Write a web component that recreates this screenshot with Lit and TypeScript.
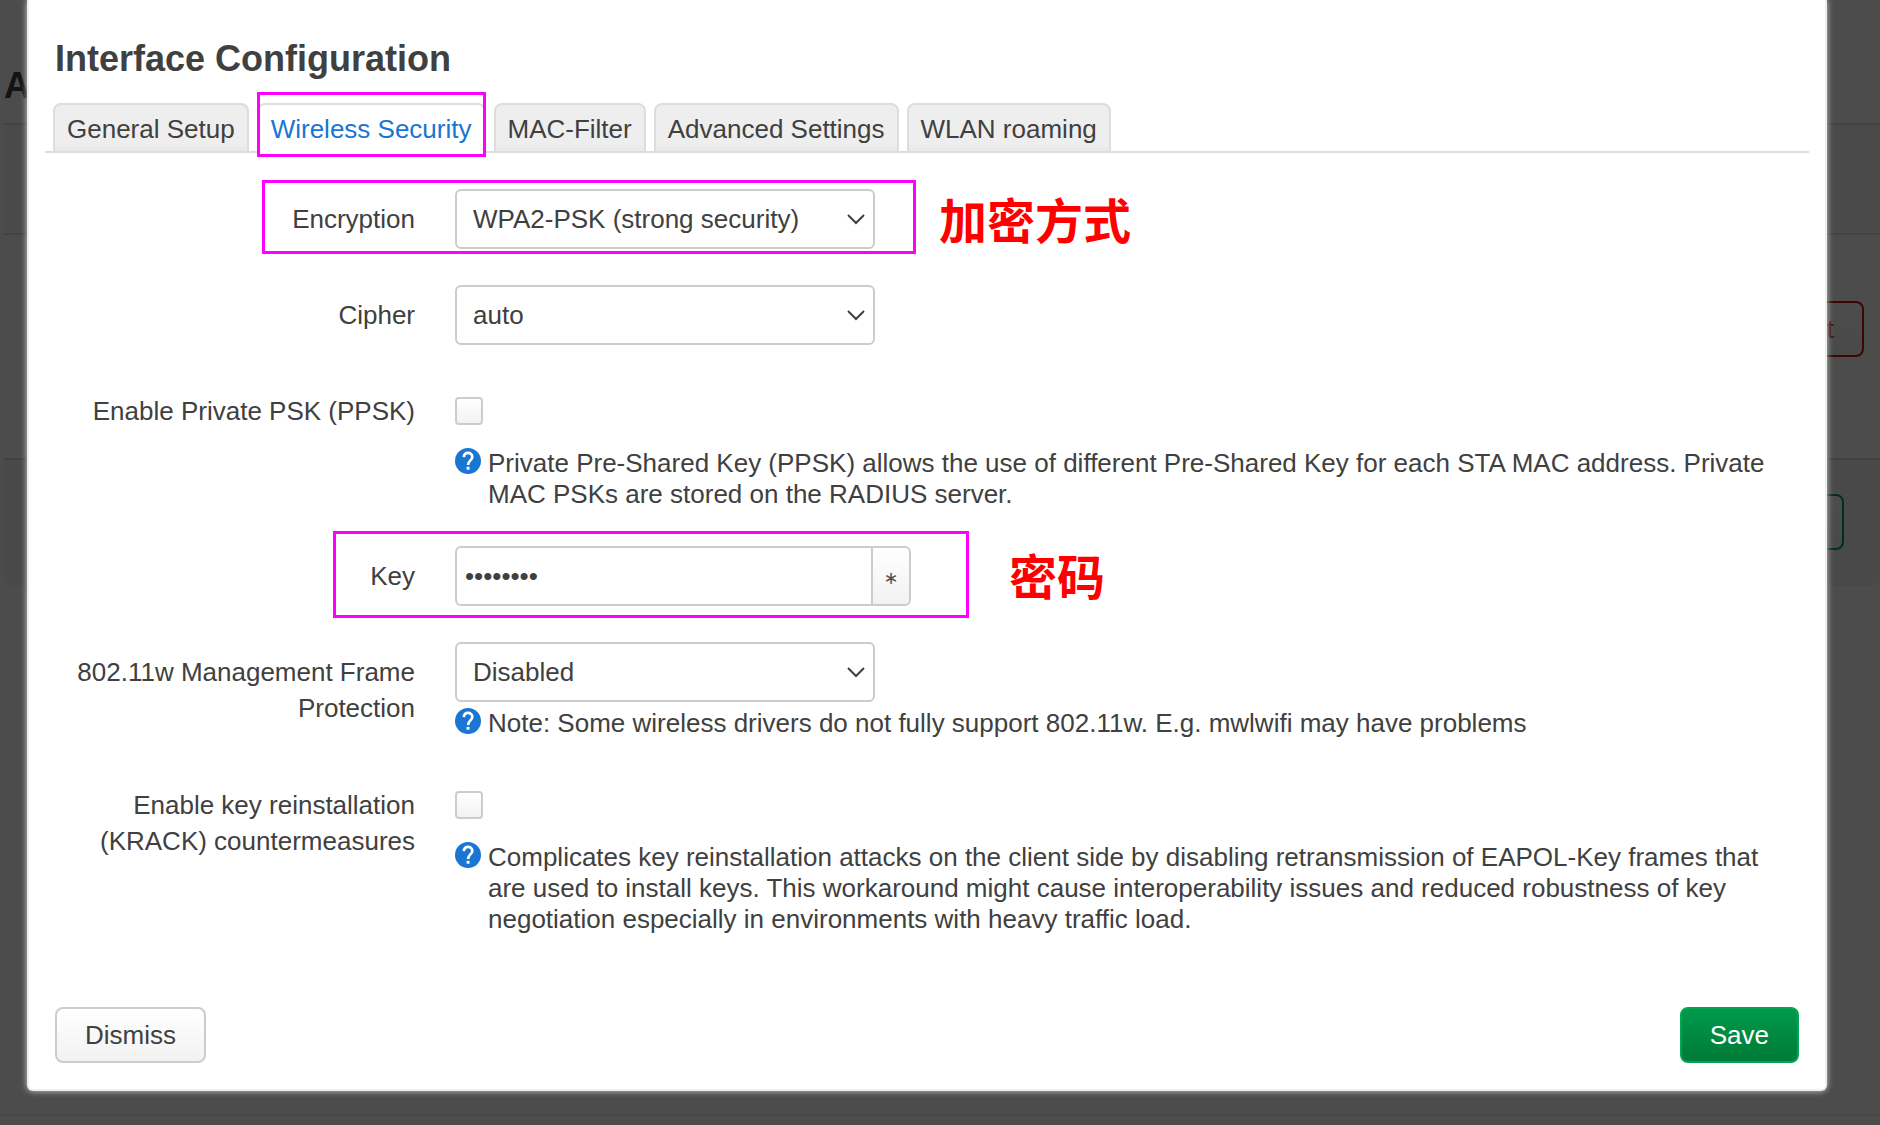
import { LitElement, html, css, nothing, type TemplateResult } from "lit";
import { customElement, state } from "lit/decorators.js";

const TABS = ["General Setup", "Wireless Security", "MAC-Filter", "Advanced Settings", "WLAN roaming"];

@customElement("wireless-overview")
class WirelessOverview extends LitElement {
  static styles = css`
    :host { display: block; padding: 66px 4px 0; color: #404040; box-sizing: border-box; }
    .title { margin: 0; font-size: 36px; line-height: 40px; height: 57px; white-space: nowrap; color: #404040; }
    .list { display: flex; flex-direction: column; margin-right: -4px; }
    .row { box-sizing: border-box; border-top: 2px solid #ddd; display: flex; justify-content: flex-end; align-items: flex-start; background: #fff; }
    .head { height: 110px; background: #f9f9f9; }
    .radio { height: 225px; padding: 66px 16px 0; }
    .net { height: 128px; padding: 34px 36px 0; background: #f5f5f5; border-radius: 0 0 8px 8px; }
    .btn { box-sizing: border-box; height: 56px; padding: 0 28px; border: 2px solid; border-radius: 8px; background: linear-gradient(#fff, #f5f5f5); font: 26px "Liberation Sans", Arial, sans-serif; }
    .danger { color: #d32f2f; border-color: #d01500; }
    .edit { color: #00793d; border-color: #00a650; }
    .rule { margin: 528px -4px 0; border: 0; border-top: 2px solid #eee; }
  `;
  render() {
    return html`
      <h2 class="title">A</h2>
      <div class="list">
        <div class="row head"></div>
        <div class="row radio"><button class="btn danger" tabindex="-1">Restart</button></div>
        <div class="row net"><button class="btn edit" tabindex="-1">Edit</button></div>
      </div>
      <hr class="rule" />
    `;
  }
}

@customElement("app-root")
class AppRoot extends LitElement {
  static styles = css`
    :host { display: block; font: 26px/36px "Liberation Sans", Arial, sans-serif; color: #404040; }
    * { box-sizing: border-box; }
    .page { position: relative; min-height: 100vh; overflow: hidden; background: #fff; }
    .backdrop { position: absolute; inset: 0; }
    .shade { position: absolute; inset: 0; background: rgba(0, 0, 0, 0.7); }
    .modal { position: relative; margin: 0 53px 34px 27px; padding: 37px 16px 26px; background: #fff; border: 2px solid #eee; border-top: 0; border-radius: 0 0 6px 6px; box-shadow: 0 0 6px #ccc; }
    h1 { margin: 0 10px 22px; font-size: 36px; line-height: 44px; font-weight: bold; }
    .tabs { display: flex; gap: 8px; padding: 0 8px; margin: 0; list-style: none; border-bottom: 2px solid #ddd; }
    .tabs li { position: relative; display: flex; }
    .tab { font: inherit; color: #404040; height: 48px; padding: 2px 12px 0; border: 2px solid #ddd; border-bottom: 0; border-radius: 8px 8px 0 0; background: linear-gradient(#eee 85%, #e8e8e8); }
    .tab.active { color: #1976d2; background: #fff; height: 50px; padding-top: 0; margin-bottom: -2px; }
    .mark { position: absolute; border: 3px solid #f0f; pointer-events: none; }
    .mark-tab { inset: -11px 0 -6px; }
    .mark-enc { inset: -9px -41px -5px -193px; }
    .mark-key { inset: -15px -58px -12px -122px; }
    .note { position: absolute; left: 100%; color: #f00; white-space: nowrap; font: bold 48px/60px "Noto Sans CJK SC", sans-serif; }
    .note-enc { top: -1px; margin-left: 64px; }
    .note-key { top: -2px; margin-left: 98px; }
    .form { display: flex; flex-direction: column; gap: 36px; padding: 36px 0 72px; }
    .field { display: grid; grid-template-columns: 370px 1fr; column-gap: 40px; align-items: start; }
    .label { text-align: right; padding-top: 12px; padding-left: 20px; }
    .control { position: relative; display: flex; width: max-content; }
    .select-box { position: relative; width: 420px; display: flex; }
    select { appearance: none; font: inherit; color: #404040; width: 100%; height: 60px; padding: 0 60px 0 16px; border: 2px solid #ccc; border-radius: 6px; background: #fff; }
    .chevron { position: absolute; right: 10px; top: 20px; width: 18px; height: 20px; fill: none; stroke: #404040; stroke-width: 2; pointer-events: none; }
    .password { font: inherit; color: #404040; width: 416px; height: 60px; padding: 0 8px; border: 2px solid #ccc; border-radius: 6px 0 0 6px; border-right: 0; }
    .reveal { font: 18px "Liberation Sans", "DejaVu Sans", sans-serif; color: #555; width: 40px; height: 60px; padding: 4px 0 0; border: 2px solid #ccc; border-radius: 0 6px 6px 0; background: linear-gradient(#fff, #f2f2f2); }
    .check { appearance: none; width: 28px; height: 28px; margin: 16px 0 17px; border: 2px solid #ccc; border-radius: 4px; background: linear-gradient(#fff, #f2f2f2); }
    .desc { display: flex; gap: 7px; padding-top: 6px; padding-right: 28px; line-height: 31px; }
    .desc p { margin: 0; }
    .help { flex: none; width: 26px; height: 26px; }
    .actions { display: flex; justify-content: space-between; padding: 0 10px; }
    .btn { font: inherit; height: 56px; padding: 0 28px; border: 2px solid #ccc; border-radius: 8px; color: #404040; background: linear-gradient(#fff, #f2f2f2); }
    .save { color: #fff; border-color: #00a651; background: linear-gradient(#009a4b, #007a37); }
  `;

  @state() private tab = 1;
  @state() private shown = false;

  private help(text: string) {
    return html`<div class="desc">
      <svg class="help" viewBox="0 0 26 26" aria-hidden="true">
        <circle cx="13" cy="13" r="13" fill="#1976d2" />
        <path d="M8.800 9.200C9 6.100 10.600 4.900 13 4.900s4.300 1.500 4.300 4c0 3.400-4.200 3.700-4.200 8" fill="none" stroke="#fff" stroke-width="2.700" />
        <rect x="11.600" y="18.800" width="2.900" height="2.900" fill="#fff" />
      </svg>
      <p>${text}</p>
    </div>`;
  }

  private field(id: string, label: string, control: TemplateResult, help = "") {
    return html`<div class="field">
      <label class="label" for=${id}>${label}</label>
      <div>
        <div class="control">${control}</div>
        ${help ? this.help(help) : nothing}
      </div>
    </div>`;
  }

  private select(id: string, options: string[]) {
    return html`<div class="select-box">
      <select id=${id}>${options.map((o) => html`<option>${o}</option>`)}</select>
      <svg class="chevron" viewBox="0 0 18 20" aria-hidden="true"><path d="M1 6l8 8 8-8" /></svg>
    </div>`;
  }

  render() {
    return html`<div class="page">
      <wireless-overview class="backdrop" aria-hidden="true"></wireless-overview>
      <div class="shade"></div>
      <main class="modal" role="dialog" aria-labelledby="title">
        <h1 id="title">Interface Configuration</h1>
        <ul class="tabs">
          ${TABS.map((t, i) => html`<li>
            <button class="tab ${i === this.tab ? "active" : ""}" @click=${() => (this.tab = i)}>${t}</button>
            ${i === 1 ? html`<span class="mark mark-tab"></span>` : nothing}
          </li>`)}
        </ul>
        <div class="form">
          ${this.field("encryption", "Encryption", html`${this.select("encryption", ["WPA2-PSK (strong security)"])}
            <span class="mark mark-enc"></span><span class="note note-enc" lang="zh-CN">加密方式</span>`)}
          ${this.field("cipher", "Cipher", this.select("cipher", ["auto"]))}
          ${this.field("ppsk", "Enable Private PSK (PPSK)", html`<input class="check" type="checkbox" id="ppsk" />`,
            "Private Pre-Shared Key (PPSK) allows the use of different Pre-Shared Key for each STA MAC address. Private MAC PSKs are stored on the RADIUS server.")}
          ${this.field("key", "Key", html`<input class="password" id="key" type=${this.shown ? "text" : "password"} value="password" />
            <button class="reveal" aria-label="Reveal/hide password" @click=${() => (this.shown = !this.shown)}>∗</button>
            <span class="mark mark-key"></span><span class="note note-key" lang="zh-CN">密码</span>`)}
          ${this.field("mfp", "802.11w Management Frame Protection", this.select("mfp", ["Disabled"]),
            "Note: Some wireless drivers do not fully support 802.11w. E.g. mwlwifi may have problems")}
          ${this.field("krack", "Enable key reinstallation (KRACK) countermeasures", html`<input class="check" type="checkbox" id="krack" />`,
            "Complicates key reinstallation attacks on the client side by disabling retransmission of EAPOL-Key frames that are used to install keys. This workaround might cause interoperability issues and reduced robustness of key negotiation especially in environments with heavy traffic load.")}
        </div>
        <div class="actions">
          <button class="btn">Dismiss</button>
          <button class="btn save">Save</button>
        </div>
      </main>
    </div>`;
  }
}
